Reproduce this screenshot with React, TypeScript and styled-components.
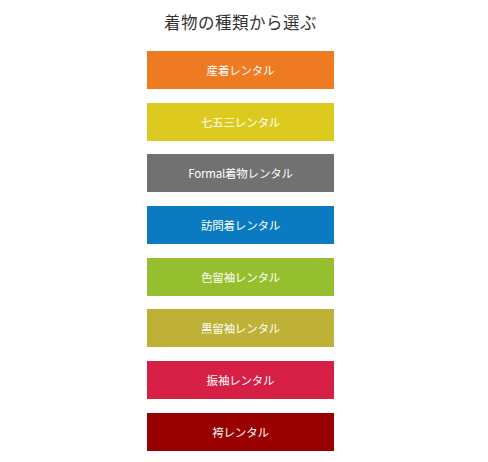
import { createGlobalStyle } from "styled-components";
import styled from "styled-components";

const GlobalStyle = createGlobalStyle`
	body {
		margin: 0;
		background: #ffffff;
		font-family: "Noto Sans CJK JP", "Noto Sans", sans-serif;
	}
`;

const Page = styled.div`
	width: 481px;
	display: flex;
	flex-direction: column;
	align-items: center;
	padding-top: 10px;
`;

const Title = styled.h2`
	margin: 0 0 15px 0;
	height: 26px;
	line-height: 28px;
	font-family: "Liberation Serif", "Noto Sans CJK JP", serif;
	font-size: 16.5px;
	font-weight: normal;
	color: #333333;
	letter-spacing: 0.5px;
`;

const List = styled.ul`
	list-style: none;
	margin: 0;
	padding: 0;
	display: flex;
	flex-direction: column;
	gap: 13.7px;
`;

const Item = styled.li`
	margin: 0;
	padding: 0;
`;

const PlanLink = styled.a<{ $bg: string }>`
	display: flex;
	align-items: center;
	justify-content: center;
	width: 187px;
	height: 38px;
	background: ${(p) => p.$bg};
	color: #ffffff;
	font-size: 11.5px;
	text-decoration: none;
	letter-spacing: -0.2px;
`;

// レンタルプラン一覧
const plans = [
	{ label: "産着レンタル", color: "#ee7b22" },
	{ label: "七五三レンタル", color: "#dccb1e" },
	{ label: "Formal着物レンタル", color: "#717171" },
	{ label: "訪問着レンタル", color: "#0b7bc1" },
	{ label: "色留袖レンタル", color: "#95bf2e" },
	{ label: "黒留袖レンタル", color: "#bfb036" },
	{ label: "振袖レンタル", color: "#d61f45" },
	{ label: "袴レンタル", color: "#990000" },
];

export default function App() {
	return (
		<>
			<GlobalStyle />
			<Page>
				<Title>着物の種類から選ぶ</Title>
				<List>
					{plans.map((plan) => (
						<Item key={plan.label}>
							<PlanLink href="#" $bg={plan.color}>
								{plan.label}
							</PlanLink>
						</Item>
					))}
				</List>
			</Page>
		</>
	);
}
